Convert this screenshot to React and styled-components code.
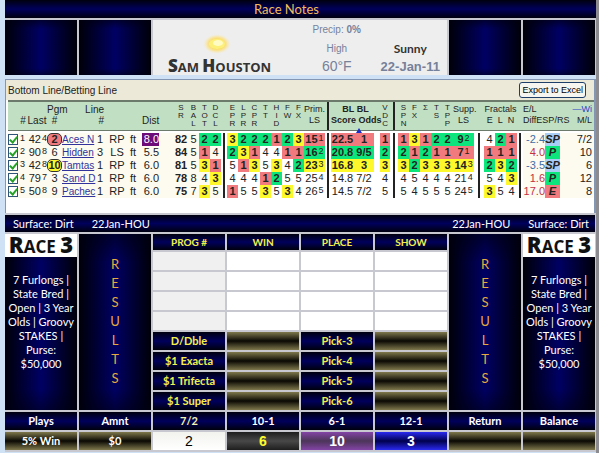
import { Fragment } from "react";
import styled, { createGlobalStyle, css } from "styled-components";

const GlobalStyle = createGlobalStyle`
  * {
    box-sizing: border-box;
  }
  body {
    margin: 0;
    background: #ffffff;
    font-family: Lato, "Liberation Sans", sans-serif;
  }
`;

const sans = `"Liberation Sans", Arial, sans-serif`;

const tones = {
  r: "#f07a7e",
  g: "#0ce57c",
  y: "#fdf82c",
  b: "#a9cdf5",
};

const fills = {
  navy: "linear-gradient(#00000f, #00005c 50%, #00000f)",
  khaki: "linear-gradient(#7f784c, #0a0903 50%, #7f784c)",
  plain: "#f0f0f0",
  white: "#ffffff",
  paper: "linear-gradient(#f2f2ee, #ffffff)",
  coal: "linear-gradient(#1e1e1e, #484848 50%, #1e1e1e)",
  purple: "linear-gradient(#8444a6, #4b3558 50%, #8444a6)",
  blue: "linear-gradient(#2a2af0, #00004e 50%, #2a2af0)",
};

const tallNavy = css`
  background:
    linear-gradient(rgba(0, 0, 16, 0.6), transparent 16%, transparent 88%, rgba(0, 0, 16, 0.5)),
    linear-gradient(90deg, #000008, #000064 50%, #000008);
`;

const Page = styled.main`
  min-height: 100vh;
  padding-left: 5px;
  border-right: 3px solid #8c8c90;
  background: #cfe1f4;
`;

const TitleBar = styled.h1`
  margin: 0;
  height: 18px;
  padding-right: 28px;
  background: ${fills.navy};
  color: #f5bc5a;
  font-size: 13px;
  font-weight: 400;
  line-height: 18px;
  text-align: center;
`;

/* every band of the sheet shares the same eight columns */
const Band = styled.section`
  display: grid;
  grid-template-columns: repeat(8, minmax(0, 1fr));
  gap: 2px;
  padding: 2px 1px 0 0;
  background: #c8c8d0;
`;

const Board = styled(Band)`
  padding-bottom: 2px;
`;

const NavyTile = styled.div`
  height: 55px;
  ${tallNavy}
`;

const Weather = styled.div`
  grid-column: 3 / 7;
  display: grid;
  grid-template-columns: 2fr 1fr 1fr;
  background: #eeeeee;
`;

const TrackLogo = styled.div`
  display: flex;
  flex-direction: column;
  align-items: center;
  justify-content: flex-end;
  padding-right: 14px;

  svg {
    margin-bottom: 2px;
  }
`;

const SmallCaps = styled.span`
  color: ${(p) => p.$color};
  font-family: "Open Sans", sans-serif;
  font-size: ${(p) => p.$small}px;
  font-weight: 700;
  line-height: 16px;
  text-transform: uppercase;
  white-space: nowrap;

  b {
    font-size: ${(p) => p.$large}px;
  }
`;

const Reading = styled.div`
  display: flex;
  flex-direction: column;
  align-items: center;
  justify-content: flex-end;
  color: #76819a;
  font-family: ${sans};
  font-size: 10px;
  line-height: 19px;
  white-space: nowrap;
`;

const Temperature = styled.span`
  font-size: 14px;
  line-height: 17px;
`;

const Sky = styled.strong`
  color: #333333;
  font-family: Lato, sans-serif;
  font-size: 12px;
`;

const RaceDate = styled.strong`
  font-size: 13px;
  line-height: 17px;
`;

const Panel = styled.section`
  margin-top: 4px;
  height: 134px;
  padding-left: 2px;
  border: 1px solid #8396b4;
  border-right-width: 2px;
  border-bottom: 0;
  background: #ffffff;
  font-family: ${sans};
`;

const PanelHead = styled.div`
  display: flex;
  align-items: center;
  justify-content: space-between;
  height: 20px;
  margin-left: -2px;
  padding: 0 8px 0 2px;
  background: #ece9d8;
`;

const PanelTitle = styled.h2`
  margin: 0;
  color: #222222;
  font-size: 10px;
  font-weight: 400;
`;

const ExportButton = styled.button`
  height: 16px;
  padding: 0 2px;
  border: 1px solid #1f3f6b;
  border-radius: 3px;
  background: #f6f5f0;
  color: #000000;
  font-family: ${sans};
  font-size: 9px;
  line-height: 13px;
`;

const BetTable = styled.table`
  width: 100%;
  table-layout: fixed;
  border-collapse: collapse;
  color: #222222;
  font-size: 11px;
  line-height: 13px;

  th,
  td {
    padding: 0;
    white-space: nowrap;
  }

  tr > :last-child {
    padding-right: 2px;
  }

  thead {
    background: #c0dfc3;
    border-top: 2px solid #6c7a6c;
    border-bottom: 1px solid #6c7a6c;
  }

  tbody::before {
    content: "";
    display: table-row;
    height: 3px;
  }
`;

const Th = styled.th`
  height: 29px;
  font-size: ${(p) => (p.$small ? 9 : 10)}px;
  font-weight: ${(p) => (p.$bold ? 700 : 400)};
  line-height: 11px;
  text-align: ${(p) => p.$align || "center"};
  vertical-align: top;
  padding-top: 2px !important;

  span {
    color: #2b45c8;
  }
`;

const StackedTh = styled(Th)`
  font-size: 8px;
  line-height: 8px;
`;

/* the table is sorted by this column */
const SortedTh = styled(Th)`
  position: relative;

  &::after {
    content: "";
    position: absolute;
    bottom: -3px;
    left: 50%;
    border: solid transparent;
    border-width: 0 3px 5px;
    border-bottom-color: #1c2cc8;
  }
`;

const Td = styled.td`
  height: 13px;
  background: ${(p) => tones[p.$tone] || (p.$cream ? "#fdfbf0" : "#ffffff")};
  color: ${(p) => p.$color || "inherit"};
  font-weight: ${(p) => (p.$tone || p.$bold ? 700 : 400)};
  font-style: ${(p) => (p.$italic ? "italic" : "normal")};
  text-align: ${(p) => p.$align || "center"};

  sup {
    padding-left: 1px;
    font-size: 9px;
    font-weight: 400;
    line-height: 8px;
    vertical-align: 2px;
  }
`;

const RuleCell = styled.td`
  background: linear-gradient(#222222, #222222) center / 2px 100% no-repeat
    ${(p) => (p.$header ? "transparent" : "#ffffff")};
`;

const Tick = styled.input`
  appearance: none;
  display: block;
  width: 10px;
  height: 11px;
  margin: 0;
  border: 1px solid #2e5577;
  background: #ffffff;

  &:checked::after {
    content: "";
    display: block;
    width: 3px;
    height: 6px;
    margin: 0 auto;
    border: solid #25a325;
    border-width: 0 2px 2px 0;
    transform: rotate(40deg);
  }
`;

const Program = styled.span`
  display: block;
  height: 13px;
  border: 1px solid ${(p) => (p.$tone ? "#333333" : "transparent")};
  border-radius: 5px;
  background: ${(p) => tones[p.$tone] || "transparent"};
  line-height: 11px;
`;

const Horse = styled.a`
  color: #32329c;
  font-size: 10px;
  text-decoration: underline;
`;

const Distance = styled.span`
  display: block;
  background: ${(p) => (p.$marked ? "#6d0b78" : "transparent")};
  color: ${(p) => (p.$marked ? "#ffffff" : "inherit")};
`;

const SurfaceBar = styled.div`
  grid-column: 1 / -1;
  display: flex;
  justify-content: space-between;
  height: 17px;
  padding: 0 6px 0 8px;
  background: ${fills.navy};
  color: #ffffff;
  font-size: 11px;
  line-height: 17px;
`;

const SurfaceGroup = styled.div`
  display: flex;
  gap: 18px;
`;

const RaceCard = styled.aside`
  text-align: center;
  ${tallNavy}
`;

const RaceNumber = styled.h2`
  display: flex;
  align-items: center;
  justify-content: center;
  height: 23px;
  margin: 0 0 16px;
  background: #ffffff;
`;

const Conditions = styled.p`
  margin: 0;
  color: #ffffff;
  font-size: 11px;
  line-height: 14px;
`;

const ResultsStrip = styled.div`
  display: flex;
  flex-direction: column;
  align-items: center;
  padding-top: 21px;
  color: #e6ab3c;
  font-size: 13px;
  line-height: 19px;
  ${tallNavy}
`;

const GridTable = styled.table`
  grid-column: ${(p) => p.$area};
  display: grid;
  grid-template-columns: repeat(${(p) => p.$columns}, minmax(0, 1fr));
  gap: 2px;

  thead,
  tbody,
  tr {
    display: contents;
  }
`;

const cell = css`
  height: ${(p) => p.$height || 18}px;
  padding: 0;
  background: ${(p) => fills[p.$fill]};
  color: ${(p) => p.$color || "#ffffff"};
  font-size: 11px;
  font-weight: ${(p) => (p.$bold ? 700 : 400)};
  line-height: ${(p) => p.$height || 18}px;
  text-align: center;
`;

const BoardHead = styled.th`
  ${cell}
`;

const BoardCell = styled.td`
  ${cell}
`;

const PayoutHead = styled(BoardHead)`
  font-size: 10px;
`;

const PickCell = styled(BoardCell)`
  font-family: ${sans};
  font-size: 14px;
`;

const YELLOW = "#f4f04a";

// column widths of the betting table, the last one takes what is left
const widths = [
  11, 8, 20, 15, 34, 8, 26, 12, 17, 15, 14, 11, 11, 11, 6,
  11, 11, 11, 11, 11, 11, 11, 21, 6, 23, 20, 6, 10, 8,
  11, 11, 11, 11, 11, 21, 10, 11, 11, 11, 6, 22, 15, null,
];

const entries = [
  {
    last: ["42", "4"], pgm: "2", pgmTone: "r", horse: "Aces N", line: 1, track: "RP", dist: "8.0",
    sr: 82, bal: 5, form: "2g 2g", ratings: "3y 2g 2g 2g 1r 2g 3y", prim: ["15", "1", "r"],
    score: "22.5", odds: "1", vdc: "1r", speed: "1r 3y 1r 2g 2g", supp: ["9", "2", "g"],
    fractals: "4 2g 1r", diff: "-2.4", style: "SP", ml: "7/2",
  },
  {
    last: ["90", "8"], pgm: "6", horse: "Hidden", line: 3, track: "LS", dist: "5.5",
    sr: 84, bal: 5, form: "1r 4", ratings: "2g 3y 1r 4 4 1r 1r", prim: ["16", "2", "g"],
    score: "20.8", odds: "9/5", vdc: "2g", speed: "2g 1r 2g 1r 1r", supp: ["7", "1", "r"],
    fractals: "1r 1r 1r", diff: "4.0", style: "P", ml: "10",
  },
  {
    last: ["42", "8"], pgm: "10", pgmTone: "y", horse: "Tamtas", line: 1, track: "RP", dist: "6.0",
    sr: 81, bal: 5, form: "3y 1r", ratings: "5 1r 3y 5 3y 4 2g", prim: ["23", "3", "y"],
    score: "16.8", odds: "3", vdc: "3y", speed: "3y 2g 3y 3y 3y", supp: ["14", "3", "y"],
    fractals: "2g 3y 2g", diff: "-3.5", style: "SP", ml: "6",
  },
  {
    last: ["79", "7"], pgm: "3", horse: "Sand D", line: 1, track: "RP", dist: "6.0",
    sr: 78, bal: 8, form: "4 3y", ratings: "4 4 4 1r 2g 5 5", prim: ["25", "4"],
    score: "14.8", odds: "7/2", vdc: "4", speed: "4 5 4 4 4", supp: ["21", "4"],
    fractals: "5 4 3y", diff: "1.6", style: "P", ml: "12",
  },
  {
    last: ["50", "8"], pgm: "9", horse: "Pachec", line: 1, track: "RP", dist: "6.0",
    sr: 75, bal: 7, form: "3y 5", ratings: "1r 5 5 3y 5 3y 4", prim: ["26", "5"],
    score: "14.5", odds: "7/2", vdc: "5", speed: "5 4 5 5 5", supp: ["24", "5"],
    fractals: "3y 5 4", diff: "17.0", style: "E", ml: "8",
  },
];

const styleTone = { SP: "b", P: "g", E: "r" };

const Lines = ({ of }) =>
  of.map((line, i) => (
    <Fragment key={i}>
      {i > 0 && <br />}
      {line}
    </Fragment>
  ));

const Stacked = ({ words }) =>
  words.map((word, i) => (
    <StackedTh key={i}>
      <Lines of={[...word]} />
    </StackedTh>
  ));

const Ranks = ({ values, cream }) =>
  values.split(" ").map((value, i) => (
    <Td key={i} $tone={value[1]} $cream={cream}>
      {value[0]}
    </Td>
  ));

const SunIcon = () => (
  <svg width="34" height="22" viewBox="0 0 34 22" aria-hidden="true">
    <defs>
      <radialGradient id="glow">
        <stop offset="0.4" stopColor="#fbd84a" />
        <stop offset="0.7" stopColor="#fbe28a" stopOpacity="0.8" />
        <stop offset="1" stopColor="#f6ecc8" stopOpacity="0" />
      </radialGradient>
    </defs>
    <ellipse cx="14" cy="10" rx="14" ry="10" fill="url(#glow)" />
    <ellipse cx="14" cy="10" rx="8" ry="5" fill="#fdf07a" />
    <ellipse cx="15" cy="9" rx="5" ry="3" fill="#fffbc4" />
  </svg>
);

const WeatherPanel = () => (
  <Weather>
    <TrackLogo>
      <SunIcon />
      <SmallCaps $color="#333333" $small={13} $large={17}>
        <b>S</b>am <b>H</b>ouston
      </SmallCaps>
    </TrackLogo>
    <Reading>
      <span>
        Precip: <b>0%</b>
      </span>
      <span>High</span>
      <Temperature>60°F</Temperature>
    </Reading>
    <Reading>
      <Sky>Sunny</Sky>
      <RaceDate>22-Jan-11</RaceDate>
    </Reading>
  </Weather>
);

const BettingLine = () => (
  <Panel>
    <PanelHead>
      <PanelTitle>Bottom Line/Betting Line</PanelTitle>
      <ExportButton type="button">Export to Excel</ExportButton>
    </PanelHead>
    <BetTable>
      <colgroup>
        {widths.map((width, i) => (
          <col key={i} width={width ?? undefined} />
        ))}
      </colgroup>
      <thead>
        <tr>
          <td />
          <Th><Lines of={["", "#"]} /></Th>
          <Th><Lines of={["", "Last"]} /></Th>
          <Th><Lines of={["Pgm", "#"]} /></Th>
          <Th colSpan={2} $align="right"><Lines of={["Line", "#"]} /></Th>
          <td colSpan={2} />
          <Th $align="right"><Lines of={["", "Dist"]} /></Th>
          <td />
          <Stacked words={["SR", "BAL", "TOT", "DCL"]} />
          <td />
          <Stacked words={["EPR", "LPR", "CPR", "TT", "HID", "FW", "FX"]} />
          <Th $small><Lines of={["Prim.", "LS"]} /></Th>
          <RuleCell $header />
          <SortedTh $small $bold colSpan={3}><Lines of={["BL  BL", "Score Odds"]} /></SortedTh>
          <Stacked words={["VDC"]} />
          <RuleCell $header />
          <Stacked words={["SPN", "FX", "Σ", "TS", "TPP"]} />
          <Th $small><Lines of={["Supp.", "LS"]} /></Th>
          <td />
          <Th $small colSpan={3}><Lines of={["Fractals", "E\u00a0 L\u00a0 N"]} /></Th>
          <td />
          <Th $small $align="left" colSpan={2}><Lines of={["E/L", "DiffESP/RS"]} /></Th>
          <Th $small $align="right"><span>—Wi</span><br />M/L</Th>
        </tr>
      </thead>
      <tbody>
        {entries.map((entry, i) => (
          <tr key={entry.horse}>
            <Td $cream>
              <Tick type="checkbox" defaultChecked aria-label={`Include ${entry.horse}`} />
            </Td>
            <Td $cream $align="left"><sup>{i + 1}</sup></Td>
            <Td $cream $align="right">{entry.last[0]}<sup>{entry.last[1]}</sup></Td>
            <Td $cream $bold={entry.pgmTone}>
              <Program $tone={entry.pgmTone}>{entry.pgm}</Program>
            </Td>
            <Td $cream $align="left"><Horse href="#">{entry.horse}</Horse></Td>
            <Td $cream>{entry.line}</Td>
            <Td $cream>{entry.track}</Td>
            <Td $cream $align="left">ft</Td>
            <Td $cream $align="right">
              <Distance $marked={entry.dist === "8.0"}>{entry.dist}</Distance>
            </Td>
            <Td $cream />
            <Td $cream $bold>{entry.sr}</Td>
            <Td $cream>{entry.bal}</Td>
            <Ranks values={entry.form} cream />
            <RuleCell />
            <Ranks values={entry.ratings} />
            <Td $tone={entry.prim[2]}>{entry.prim[0]}<sup>{entry.prim[1]}</sup></Td>
            <RuleCell />
            <Td $tone={entry.vdc[1]}>{entry.score}</Td>
            <Td $tone={entry.vdc[1]}>{entry.odds}</Td>
            <Td />
            <Ranks values={entry.vdc} />
            <RuleCell />
            <Ranks values={entry.speed} />
            <Td $tone={entry.supp[2]}>{entry.supp[0]}<sup>{entry.supp[1]}</sup></Td>
            <RuleCell />
            <Ranks values={entry.fractals} />
            <RuleCell />
            <Td $cream $align="right" $color={entry.diff[0] === "-" ? "#3c6ea8" : "#c23046"}>
              {entry.diff}
            </Td>
            <Td $tone={styleTone[entry.style]} $italic>{entry.style}</Td>
            <Td $cream $align="right">{entry.ml}</Td>
          </tr>
        ))}
      </tbody>
    </BetTable>
  </Panel>
);

const Race = () => (
  <RaceCard>
    <RaceNumber>
      <SmallCaps $color="#111111" $small={17} $large={22}>
        <b>R</b>ace <b>3</b>
      </SmallCaps>
    </RaceNumber>
    <Conditions>
      <Lines
        of={["7 Furlongs |", "State Bred |", "Open | 3 Year", "Olds | Groovy", "STAKES |", "Purse:", "$50,000"]}
      />
    </Conditions>
  </RaceCard>
);

const Results = () => (
  <ResultsStrip>
    {[..."RESULTS"].map((letter, i) => (
      <span key={i}>{letter}</span>
    ))}
  </ResultsStrip>
);

const exotics = [
  ["D/Dble", "Pick-3"],
  ["$1 Exacta", "Pick-4"],
  ["$1 Trifecta", "Pick-5"],
  ["$1 Super", "Pick-6"],
];

const Payouts = () => (
  <GridTable $area="3 / 7" $columns={4}>
    <thead>
      <tr>
        {["PROG #", "WIN", "PLACE", "SHOW"].map((label) => (
          <PayoutHead key={label} $fill="navy" $color={YELLOW} $height={16} $bold>
            {label}
          </PayoutHead>
        ))}
      </tr>
    </thead>
    <tbody>
      {[0, 1, 2, 3].map((row) => (
        <tr key={row}>
          <BoardCell $fill="plain" />
          <BoardCell $fill="white" />
          <BoardCell $fill="white" />
          <BoardCell $fill="white" />
        </tr>
      ))}
      {exotics.map(([left, right]) => (
        <tr key={left}>
          <BoardCell $fill="navy" $color={YELLOW} $bold>{left}</BoardCell>
          <BoardCell $fill="khaki" />
          <BoardCell $fill="navy" $color={YELLOW} $bold>{right}</BoardCell>
          <BoardCell $fill="khaki" />
        </tr>
      ))}
    </tbody>
  </GridTable>
);

const Plays = () => (
  <GridTable $area="1 / -1" $columns={8}>
    <thead>
      <tr>
        {["Plays", "Amnt", "7/2", "10-1", "6-1", "12-1", "Return", "Balance"].map((label) => (
          <BoardHead key={label} $fill="navy" $color={label === "7/2" ? "#f5f3b0" : "#ffffff"} $bold>
            {label}
          </BoardHead>
        ))}
      </tr>
    </thead>
    <tbody>
      <tr>
        <BoardCell $fill="khaki" $bold>5% Win</BoardCell>
        <BoardCell $fill="khaki" $bold>$0</BoardCell>
        <PickCell $fill="paper" $color="#000000">2</PickCell>
        <PickCell $fill="coal" $color="#fdfb2c" $bold>6</PickCell>
        <PickCell $fill="purple" $bold>10</PickCell>
        <PickCell $fill="blue" $bold>3</PickCell>
        <BoardCell $fill="khaki" />
        <BoardCell $fill="khaki" />
      </tr>
    </tbody>
  </GridTable>
);

export default function App() {
  return (
    <>
      <GlobalStyle />
      <Page>
        <TitleBar>Race Notes</TitleBar>
        <Band>
          <NavyTile />
          <NavyTile />
          <WeatherPanel />
          <NavyTile />
          <NavyTile />
        </Band>
        <BettingLine />
        <Board>
          <SurfaceBar>
            <SurfaceGroup>
              <span>Surface: Dirt</span>
              <span>22Jan-HOU</span>
            </SurfaceGroup>
            <SurfaceGroup>
              <span>22Jan-HOU</span>
              <span>Surface: Dirt</span>
            </SurfaceGroup>
          </SurfaceBar>
          <Race />
          <Results />
          <Payouts />
          <Results />
          <Race />
          <Plays />
        </Board>
      </Page>
    </>
  );
}
